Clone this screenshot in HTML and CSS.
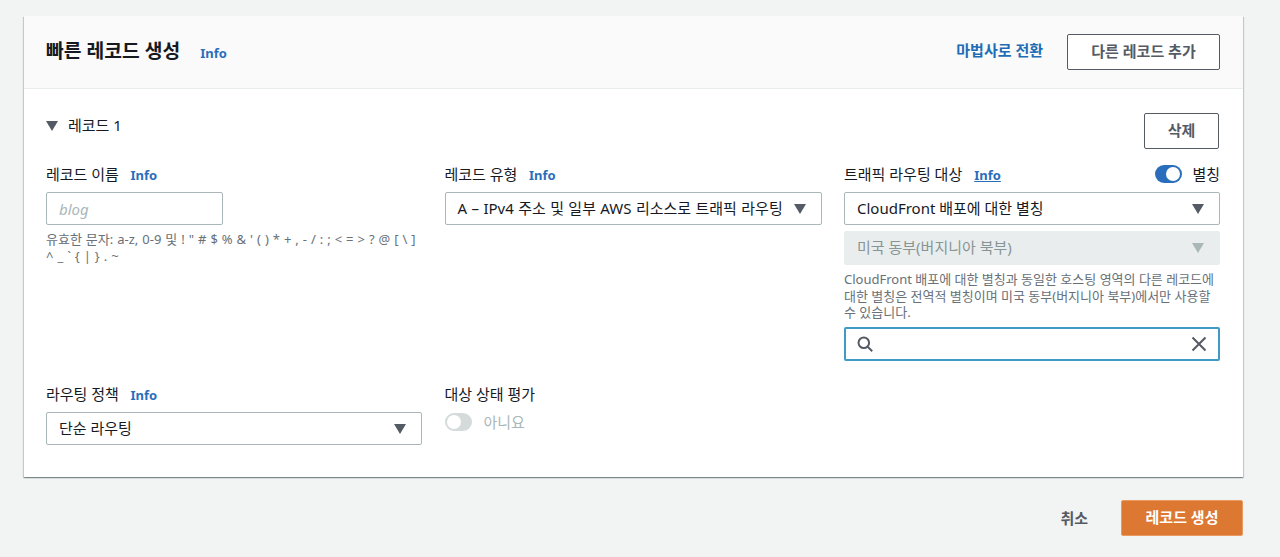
FILE: index.html
```html
<!DOCTYPE html>
<html lang="ko">
<head>
<meta charset="utf-8">
<title>빠른 레코드 생성</title>
<link rel="stylesheet" href="styles.css">
</head>
<body>
<main class="page">
  <section class="card">
    <header class="card-head">
      <div class="head-title"><h1>빠른 레코드 생성</h1><a class="info head-info">Info</a></div>
      <div class="head-actions"><a class="wizard">마법사로 전환</a><button class="btn btn-add">다른 레코드 추가</button></div>
    </header>
    <div class="card-body">
      <div class="record-head">
        <div class="record-title"><svg class="caret" viewBox="0 0 12 10"><path d="M0 0h12L6 10z"/></svg><span>레코드 1</span></div>
        <button class="btn btn-del">삭제</button>
      </div>
      <div class="row row-top">
        <div class="field">
          <div class="label"><span>레코드 이름</span><a class="info">Info</a></div>
          <div class="input name-input">blog</div>
          <p class="hint hint-chars">유효한 문자: a-z, 0-9 및 ! " # $ % &amp; ' ( ) * + , - / : ; &lt; = &gt; ? @ [ \ ]<br>^ _ ` { | } . ~</p>
        </div>
        <div class="field">
          <div class="label"><span>레코드 유형</span><a class="info">Info</a></div>
          <div class="select select-type"><span>A – IPv4 주소 및 일부 AWS 리소스로 트래픽 라우팅</span><svg class="caret" viewBox="0 0 12 10"><path d="M0 0h12L6 10z"/></svg></div>
        </div>
        <div class="field">
          <div class="label label-split">
            <div class="label-left"><span>트래픽 라우팅 대상</span><a class="info info-ul">Info</a></div>
            <div class="alias"><span class="toggle on"><i></i></span><span>별칭</span></div>
          </div>
          <div class="select"><span>CloudFront 배포에 대한 별칭</span><svg class="caret" viewBox="0 0 12 10"><path d="M0 0h12L6 10z"/></svg></div>
          <div class="select disabled"><span>미국 동부(버지니아 북부)</span><svg class="caret" viewBox="0 0 12 10"><path d="M0 0h12L6 10z"/></svg></div>
          <p class="hint hint-cf">CloudFront 배포에 대한 별칭과 동일한 호스팅 영역의 다른 레코드에 대한 별칭은 전역적 별칭이며 미국 동부(버지니아 북부)에서만 사용할 수 있습니다.</p>
          <div class="search">
            <svg class="ico" viewBox="0 0 16 16"><circle cx="6.8" cy="6.8" r="5.3"/><path d="M10.6 10.6l4.6 4.6"/></svg>
            <svg class="ico" viewBox="0 0 16 16"><path d="M1.5 1.5l13 13M14.5 1.5l-13 13"/></svg>
          </div>
        </div>
      </div>
      <div class="row row-bottom">
        <div class="field">
          <div class="label"><span>라우팅 정책</span><a class="info">Info</a></div>
          <div class="select"><span>단순 라우팅</span><svg class="caret" viewBox="0 0 12 10"><path d="M0 0h12L6 10z"/></svg></div>
        </div>
        <div class="field">
          <div class="label"><span>대상 상태 평가</span></div>
          <div class="health"><span class="toggle off"><i></i></span><span>아니요</span></div>
        </div>
      </div>
    </div>
  </section>
  <footer class="actions">
    <a class="cancel">취소</a>
    <button class="btn-primary">레코드 생성</button>
  </footer>
</main>
</body>
</html>
```
FILE: styles.css
```css
* { box-sizing: border-box; }
html, body { margin: 0; height: 100%; }
body {
  background: #f2f3f3;
  color: #16191f;
  font-family: "Noto Sans", "Noto Sans CJK KR", sans-serif;
  font-size: 15px;
  line-height: 20px;
  overflow: hidden;
}
.page { padding: 16px 37px 0 24px; }
.card {
  background: #fff;
  height: 461px;
  box-shadow: 0 1px 1px 0 rgba(0, 28, 36, .3), 1px 1px 1px 0 rgba(0, 28, 36, .15), -1px 1px 1px 0 rgba(0, 28, 36, .15);
}
.card-head {
  height: 73px;
  background: #fafafa;
  border-bottom: 1px solid #eaeded;
  display: flex;
  align-items: center;
  justify-content: space-between;
  padding: 0 23px 0 22px;
}
.head-title { display: flex; align-items: center; gap: 20px; }
h1 { margin: 0; font-size: 19.3px; font-weight: 700; line-height: 24px; position: relative; top: -1px; }
.info { color: #2a6ebb; font-size: 13px; font-weight: 700; line-height: 16px; position: relative; top: 1px; }
.info-ul { text-decoration: underline; }
.head-actions { display: flex; align-items: center; gap: 24px; }
.wizard { color: #1f6cb5; font-weight: 700; position: relative; top: -2px; }
.btn {
  background: #fff;
  border: 1px solid #545b64;
  border-radius: 2px;
  color: #545b64;
  font: 700 15px/20px "Noto Sans", "Noto Sans CJK KR", sans-serif;
  padding: 0 0 2px;
}
.btn-add { width: 153px; height: 36px; }
.btn-del { width: 75px; height: 36px; }
.card-body { padding: 24px 23px 0 22px; }
.record-head { display: flex; justify-content: space-between; align-items: flex-start; height: 51px; padding-right: 1px; }
.record-title { display: flex; align-items: center; gap: 10px; height: 24px; }
.caret { width: 12px; height: 10px; margin-top: 2px; fill: #545b64; flex: none; }
.row { display: grid; grid-template-columns: 376px 377px 376px; column-gap: 22.5px; }
.row-top { height: 220px; }
.label { display: flex; align-items: center; gap: 11.5px; height: 20px; margin-bottom: 8px; }
.label-split { justify-content: space-between; }
.label-left { display: flex; align-items: center; gap: 12px; }
.alias { display: flex; align-items: center; gap: 10px; }
.toggle { display: block; width: 27px; height: 18px; border-radius: 9px; position: relative; flex: none; }
.toggle i { position: absolute; top: 2px; width: 14px; height: 14px; border-radius: 50%; background: #fff; }
.toggle.on { background: #2a6ebb; }
.toggle.on i { right: 2px; }
.toggle.off { background: #d5dbdb; }
.toggle.off i { left: 2px; }
.input, .select {
  height: 33px;
  border: 1px solid #aab7b8;
  border-radius: 2px;
  background: #fff;
}
.name-input {
  width: 177px;
  padding: 0 12px;
  color: #aab7b8;
  font-style: italic;
  display: flex;
  align-items: center;
}
.select {
  display: flex;
  align-items: center;
  justify-content: space-between;
  padding: 0 15px 2px 12px;
}
.select-type { word-spacing: 0.5px; }
.select.disabled {
  height: 34px;
  margin-top: 6px;
  background: #eaeded;
  border-color: #eaeded;
  color: #879596;
}
.select.disabled .caret { fill: #aab7b8; }
.hint { margin: 6px 0 0; font-size: 13px; line-height: 16.5px; color: #687078; }
.hint-chars { word-spacing: 0.6px; }
.hint-cf { margin-bottom: 6px; }
.search {
  height: 34px;
  border: 2px solid #3f9ac4;
  border-radius: 2px;
  display: flex;
  align-items: center;
  justify-content: space-between;
  padding: 0 11px;
}
.ico { width: 16px; height: 16px; fill: none; stroke: #545b64; stroke-width: 2; }
.health { display: flex; align-items: center; gap: 12px; color: #aab7b8; height: 20px; }
.actions { display: flex; justify-content: flex-end; align-items: center; gap: 33px; margin-top: 23px; }
.cancel { color: #545b64; font-weight: 700; }
.btn-primary {
  width: 122px;
  height: 36px;
  background: #dd7833;
  border: 1px solid #e89a5f;
  border-radius: 2px;
  color: #fff;
  font: 700 15px/20px "Noto Sans", "Noto Sans CJK KR", sans-serif;
  padding: 0 0 2px;
}
```
